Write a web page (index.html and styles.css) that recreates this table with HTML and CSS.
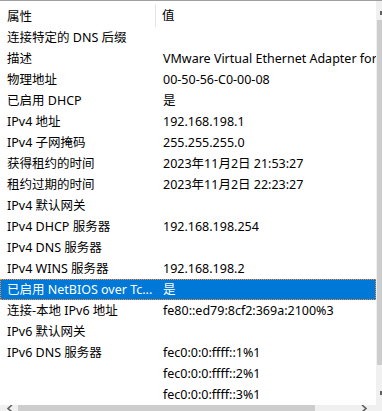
FILE: index.html
```html
<!DOCTYPE html>
<html lang="zh-CN">
<head>
  <meta charset="UTF-8" />
  <title>网络连接详细信息</title>
  <link rel="stylesheet" href="styles.css">
</head>
<body>
  <div class="frame">
    <div class="listview">
      <div class="list-header">
        <div class="col-name">属性</div>
        <div class="col-value">值</div>
      </div>
      <div class="row"><div class="col-name">连接特定的 DNS 后缀</div><div class="col-value"></div></div>
      <div class="row"><div class="col-name">描述</div><div class="col-value">VMware Virtual Ethernet Adapter for</div></div>
      <div class="row"><div class="col-name">物理地址</div><div class="col-value">00-50-56-C0-00-08</div></div>
      <div class="row"><div class="col-name">已启用 DHCP</div><div class="col-value">是</div></div>
      <div class="row"><div class="col-name">IPv4 地址</div><div class="col-value">192.168.198.1</div></div>
      <div class="row"><div class="col-name">IPv4 子网掩码</div><div class="col-value">255.255.255.0</div></div>
      <div class="row"><div class="col-name">获得租约的时间</div><div class="col-value">2023年11月2日 21:53:27</div></div>
      <div class="row"><div class="col-name">租约过期的时间</div><div class="col-value">2023年11月2日 22:23:27</div></div>
      <div class="row"><div class="col-name">IPv4 默认网关</div><div class="col-value"></div></div>
      <div class="row"><div class="col-name">IPv4 DHCP 服务器</div><div class="col-value">192.168.198.254</div></div>
      <div class="row"><div class="col-name">IPv4 DNS 服务器</div><div class="col-value"></div></div>
      <div class="row"><div class="col-name">IPv4 WINS 服务器</div><div class="col-value">192.168.198.2</div></div>
      <div class="row selected"><div class="col-name">已启用 NetBIOS over Tc...</div><div class="col-value">是</div></div>
      <div class="row"><div class="col-name">连接-本地 IPv6 地址</div><div class="col-value">fe80::ed79:8cf2:369a:2100%3</div></div>
      <div class="row"><div class="col-name">IPv6 默认网关</div><div class="col-value"></div></div>
      <div class="row"><div class="col-name">IPv6 DNS 服务器</div><div class="col-value">fec0:0:0:ffff::1%1</div></div>
      <div class="row"><div class="col-name"></div><div class="col-value">fec0:0:0:ffff::2%1</div></div>
      <div class="row"><div class="col-name"></div><div class="col-value">fec0:0:0:ffff::3%1</div></div>
    </div>

    <!-- vertical scrollbar, only its left edge is on screen -->
    <div class="vscroll">
      <div class="arrow-box"><span class="arrow-tick"></span></div>
      <div class="thumb"></div>
      <div class="track"><span class="arrow-tick"></span></div>
    </div>

    <div class="hscroll">
      <div class="arrow-box">
        <svg width="8" height="7" viewBox="0 0 8 7"><path d="M7 0 L3 3.5 L7 7" fill="none" stroke="#606060" stroke-width="1.6"/></svg>
      </div>
      <div class="thumb"></div>
      <div class="track">
        <svg width="8" height="7" viewBox="0 0 8 7"><path d="M1 0 L5 3.5 L1 7" fill="none" stroke="#606060" stroke-width="1.6"/></svg>
      </div>
    </div>
    <div class="corner"></div>
  </div>
</body>
</html>
```

FILE: styles.css
```css
html, body {
  margin: 0;
  height: 100%;
  overflow: hidden;
  background: #fff;
}

body {
  font-family: "Noto Sans", "Noto Sans CJK SC", sans-serif;
  font-size: 12.5px;
  color: #000;
}

.frame {
  display: grid;
  grid-template-columns: 376px 6px;
  grid-template-rows: 403px 8px;
  height: 411px;
  border-top: 1px solid #a0a0a0;
  box-sizing: border-box;
}

.listview {
  overflow: hidden;
  background: #fff;
}

.list-header,
.row {
  display: grid;
  grid-template-columns: 156px 1fr;
  white-space: nowrap;
}

.list-header {
  height: 26px;
  align-items: center;
}

.list-header .col-name {
  height: 23px;
  margin-top: 2px;
  display: flex;
  align-items: center;
  border-right: 1px solid #e5e5e5;
}

.list-header .col-value {
  padding-left: 6px;
}

.row {
  height: 21px;
  line-height: 21px;
}

.col-name {
  padding-left: 7px;
  overflow: hidden;
}

.col-value {
  padding-left: 7px;
  overflow: hidden;
}

.row.selected {
  background: #0078d7;
  color: #fff;
  outline: 1px dotted #ff8a28;
  outline-offset: -1px;
}

/* scrollbars */
.vscroll {
  display: flex;
  flex-direction: column;
  background: #f0f0f0;
}

.vscroll .arrow-box {
  height: 19px;
  position: relative;
}

.vscroll .thumb {
  height: 345px;
  background: #cdcdcd;
  margin-left: 1px;
}

.vscroll .track {
  flex: 1;
  position: relative;
}

.vscroll .arrow-tick {
  position: absolute;
  right: 0;
  width: 2px;
  height: 4px;
  background: #606060;
}

.vscroll .arrow-box .arrow-tick {
  top: 10px;
}

.vscroll .track .arrow-tick {
  top: 26px;
}

.hscroll {
  display: flex;
  background: #f0f0f0;
  margin-top: 1px;
}

.hscroll .arrow-box {
  width: 18px;
  display: flex;
  justify-content: center;
  align-items: flex-end;
}

.hscroll .thumb {
  width: 297px;
  background: #cdcdcd;
}

.hscroll .track {
  flex: 1;
  display: flex;
  justify-content: flex-end;
  align-items: flex-end;
  padding-right: 7px;
}

.corner {
  background: #f0f0f0;
}
```
